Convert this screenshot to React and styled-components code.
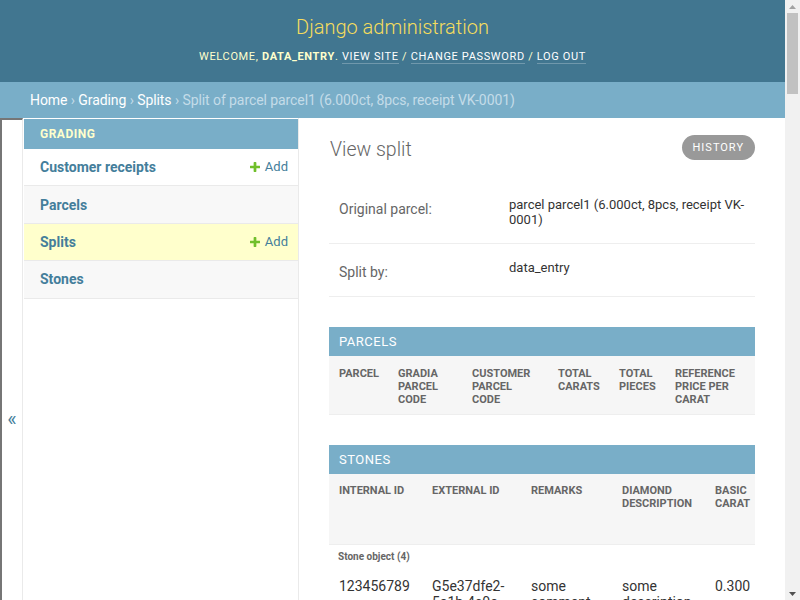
import React from 'react';
import styled, { createGlobalStyle } from 'styled-components';

const GlobalStyle = createGlobalStyle`
  html, body { margin: 0; padding: 0; }
  body {
    font-family: Roboto, "Lucida Grande", "DejaVu Sans", Verdana, Arial, sans-serif;
    font-size: 14px;
    color: #333;
    background: #fff;
  }
  a { text-decoration: none; }
`;

const Page = styled.div`
  margin-right: 15px;
`;

const ScrollTrack = styled.div`
  position: fixed;
  top: 0;
  right: 0;
  width: 15px;
  height: 100vh;
  background: #f1f1f1;
  display: flex;
  flex-direction: column;
  align-items: center;
  z-index: 50;
`;

const ScrollArrow = styled.div`
  height: 13px;
  width: 15px;
  display: flex;
  align-items: center;
  justify-content: center;
  flex: 0 0 13px;
`;

const ScrollThumb = styled.div`
  width: 11px;
  height: 81px;
  background: #c1c1c1;
`;

const ScrollSpace = styled.div`
  flex: 1;
`;

const Header = styled.header`
  background: #417690;
  color: #ffc;
  height: 82px;
  box-sizing: border-box;
  padding: 15px 30px 0;
  display: flex;
  flex-direction: column;
  align-items: center;
`;

const Branding = styled.h1`
  margin: 0;
  font-size: 20px;
  font-weight: 300;
  line-height: 24px;
  color: #f5dd5d;
`;

const UserTools = styled.div`
  margin-top: 11px;
  font-size: 11px;
  line-height: 14px;
  letter-spacing: 0.65px;
  text-transform: uppercase;
  color: #ffc;
  strong { font-weight: bold; }
`;

const ToolLink = styled.a`
  color: #fff;
  border-bottom: 1px solid rgba(255, 255, 255, 0.25);
`;

const Breadcrumbs = styled.nav`
  background: #79aec8;
  padding: 10px 30px;
  font-size: 14px;
  line-height: 16px;
  color: #c4dce8;
  letter-spacing: -0.08px;
`;

const Crumb = styled.a`
  color: #fff;
`;

const Main = styled.div`
  display: flex;
  align-items: stretch;
`;

const Toggle = styled.button`
  flex: 0 0 23px;
  width: 23px;
  height: 100vh;
  align-self: flex-start;
  box-sizing: border-box;
  padding: 0;
  margin: 0;
  border: 0;
  border-left: 2px solid #767676;
  border-top: 2px solid #767676;
  border-right: 1px solid #eaeaea;
  background: #fff;
  color: #447e9b;
  font-family: Roboto, sans-serif;
  font-size: 20px;
  display: flex;
  align-items: center;
  justify-content: center;
  cursor: pointer;
`;

const Sidebar = styled.nav`
  flex: 0 0 276px;
  box-sizing: border-box;
  padding: 1px 0 0 1px;
  border-right: 1px solid #eaeaea;
`;

const ModuleCaption = styled.div`
  background: #79aec8;
  color: #ffc;
  height: 30px;
  line-height: 30px;
  padding: 0 16px;
  font-size: 12px;
  font-weight: bold;
  letter-spacing: 0.5px;
  text-transform: uppercase;
`;

const NavRow = styled.div`
  display: flex;
  align-items: center;
  justify-content: space-between;
  box-sizing: border-box;
  height: 37.4px;
  padding: 0 10px 0 16px;
  line-height: 16px;
  border-bottom: 1px solid #eaeaea;
  background: ${(p) => (p.$current ? '#ffc' : p.$alt ? '#f8f8f8' : '#fff')};
`;

const NavLink = styled.a`
  color: #447e9b;
  font-size: 14px;
  font-weight: bold;
`;

const AddLink = styled.a`
  color: #447e9b;
  font-size: 13px;
  display: flex;
  align-items: center;
  gap: 5px;
`;

const Content = styled.main`
  flex: 1;
  min-width: 0;
  padding: 17px 30px 40px;
`;

const TitleRow = styled.div`
  display: flex;
  justify-content: space-between;
  align-items: flex-start;
  margin-bottom: 19px;
`;

const Title = styled.h1`
  margin: 3px 0 0 1px;
  font-size: 19.5px;
  line-height: 24px;
  font-weight: 300;
  color: #666;
`;

const HistoryButton = styled.a`
  display: block;
  height: 25px;
  line-height: 25px;
  padding: 0 11px;
  border-radius: 15px;
  background: #999;
  color: #fff;
  font-size: 11px;
  letter-spacing: 1px;
  text-transform: uppercase;
`;

const FormRow = styled.div`
  display: flex;
  padding: 10px;
  border-bottom: 1px solid #eee;
`;

const Label = styled.div`
  flex: 0 0 170px;
  box-sizing: border-box;
  padding: 10px 10px 6px 0;
  line-height: 16px;
  font-size: 14px;
  color: #666;
`;

const Readonly = styled.div`
  flex: 1;
  padding: 6px 0;
  line-height: 15px;
  font-size: 13px;
  color: #333;
`;

const InlineGroup = styled.div`
  margin-top: 30px;
`;

const InlineTitle = styled.h2`
  margin: 0;
  background: #79aec8;
  color: #fff;
  height: 29px;
  line-height: 29px;
  padding: 0 10px;
  font-size: 13px;
  font-weight: 400;
  letter-spacing: 0.5px;
  text-transform: uppercase;
`;

const TableWrap = styled.div`
  overflow: hidden;
`;

const Table = styled.table`
  border-collapse: collapse;
  table-layout: fixed;
  width: ${(p) => p.$width}px;
`;

const Th = styled.th`
  background: #f6f6f6;
  color: #666;
  font-size: 11px;
  line-height: 13px;
  font-weight: bold;
  text-transform: uppercase;
  text-align: left;
  vertical-align: top;
  padding: ${(p) => (p.$h ? '10px' : '11px')} 10px 8px;
  height: ${(p) => p.$h || 'auto'};
  box-sizing: border-box;
  border-bottom: 1px solid #eee;
`;

const OriginalCell = styled.td`
  padding: 6px 9px;
  font-size: 10px;
  line-height: 12px;
  font-weight: bold;
  color: #666;
`;

const Td = styled.td`
  padding: 9px 10px 8px;
  font-size: 14px;
  line-height: 16px;
  color: #333;
  vertical-align: top;
  word-wrap: break-word;
  border-bottom: 1px solid #eee;
`;

const PlusIcon = () => (
  <svg width="10" height="10" viewBox="192 188 1408 1408" aria-hidden="true">
    <path
      fill="#70bf2b"
      d="M1600 796v192q0 40-28 68t-68 28h-416v416q0 40-28 68t-68 28h-192q-40 0-68-28t-28-68v-416h-416q-40 0-68-28t-28-68v-192q0-40 28-68t68-28h416v-416q0-40 28-68t68-28h192q40 0 68 28t28 68v416h416q40 0 68 28t28 68z"
    />
  </svg>
);

const ArrowIcon = ({ up, color }) => (
  <svg width="7" height="4" viewBox="0 0 7 4" aria-hidden="true">
    <path d={up ? 'M3.5 0L7 4H0z' : 'M0 0h7L3.5 4z'} fill={color} />
  </svg>
);

const navItems = [
  { name: 'Customer receipts', add: true },
  { name: 'Parcels' },
  { name: 'Splits', add: true, current: true },
  { name: 'Stones' },
];

const parcelCols = [
  ['Parcel', 59],
  ['Gradia parcel code', 74],
  ['Customer parcel code', 86],
  ['Total carats', 61],
  ['Total pieces', 56],
  ['Reference price per carat', 90],
];

const stoneCols = [
  ['Internal id', 93],
  ['External id', 99],
  ['Remarks', 91],
  ['Diamond description', 93],
  ['Basic carat', 80],
];

const hex = (n) => ((n * 2654435761) >>> 0).toString(16).padStart(8, '0').slice(0, 8);

const stones = Array.from({ length: 6 }, (_, i) => {
  const id = 4 + i;
  const external =
    i === 0 ? 'G5e37dfe2-5a1b-4c0e' : `G${hex(id)}-${hex(id * 7).slice(0, 4)}-${hex(id * 13).slice(0, 4)}`;
  return [
    `Stone object (${id})`,
    [String(123456789 + i), external, 'some comment text', 'some description text', (0.3 + i * 0.05).toFixed(3)],
  ];
});

const sum = (cols) => cols.reduce((a, c) => a + c[1], 0);

export default function App() {
  return (
    <>
      <GlobalStyle />
      <Page>
        <Header>
          <Branding>Django administration</Branding>
          <UserTools>
            Welcome, <strong>data_entry</strong>. <ToolLink href="#">View site</ToolLink> /{' '}
            <ToolLink href="#">Change password</ToolLink> / <ToolLink href="#">Log out</ToolLink>
          </UserTools>
        </Header>
        <Breadcrumbs>
          <Crumb href="#">Home</Crumb> › <Crumb href="#">Grading</Crumb> › <Crumb href="#">Splits</Crumb> ›
          {' '}Split of parcel parcel1 (6.000ct, 8pcs, receipt VK-0001)
        </Breadcrumbs>
        <Main>
          <Toggle aria-label="Toggle navigation">«</Toggle>
          <Sidebar>
            <ModuleCaption>Grading</ModuleCaption>
            {navItems.map((item, i) => (
              <NavRow key={item.name} $alt={i % 2 === 1} $current={item.current}>
                <NavLink href="#">{item.name}</NavLink>
                {item.add && (
                  <AddLink href="#">
                    <PlusIcon />
                    Add
                  </AddLink>
                )}
              </NavRow>
            ))}
          </Sidebar>
          <Content>
            <TitleRow>
              <Title>View split</Title>
              <HistoryButton href="#">History</HistoryButton>
            </TitleRow>
            <div>
              <FormRow>
                <Label>Original parcel:</Label>
                <Readonly>parcel parcel1 (6.000ct, 8pcs, receipt VK-0001)</Readonly>
              </FormRow>
              <FormRow>
                <Label>Split by:</Label>
                <Readonly>data_entry</Readonly>
              </FormRow>
            </div>
            <InlineGroup>
              <InlineTitle>Parcels</InlineTitle>
              <TableWrap>
                <Table $width={sum(parcelCols)}>
                  <colgroup>
                    {parcelCols.map(([n, w]) => (
                      <col key={n} style={{ width: w }} />
                    ))}
                  </colgroup>
                  <thead>
                    <tr>
                      {parcelCols.map(([n]) => (
                        <Th key={n}>{n}</Th>
                      ))}
                    </tr>
                  </thead>
                </Table>
              </TableWrap>
            </InlineGroup>
            <InlineGroup>
              <InlineTitle>Stones</InlineTitle>
              <TableWrap>
                <Table $width={sum(stoneCols)}>
                  <colgroup>
                    {stoneCols.map(([n, w]) => (
                      <col key={n} style={{ width: w }} />
                    ))}
                  </colgroup>
                  <thead>
                    <tr>
                      {stoneCols.map(([n]) => (
                        <Th key={n} $h="70px">{n}</Th>
                      ))}
                    </tr>
                  </thead>
                  <tbody>
                    {stones.map(([label, cells]) => (
                      <React.Fragment key={label}>
                        <tr>
                          <OriginalCell colSpan={stoneCols.length}>{label}</OriginalCell>
                        </tr>
                        <tr>
                          {cells.map((c, i) => (
                            <Td key={i}>{c}</Td>
                          ))}
                        </tr>
                      </React.Fragment>
                    ))}
                  </tbody>
                </Table>
              </TableWrap>
            </InlineGroup>
          </Content>
        </Main>
      </Page>
      <ScrollTrack aria-hidden="true">
        <ScrollArrow>
          <ArrowIcon up color="#a3a3a3" />
        </ScrollArrow>
        <ScrollThumb />
        <ScrollSpace />
        <ScrollArrow>
          <ArrowIcon color="#505050" />
        </ScrollArrow>
      </ScrollTrack>
    </>
  );
}
